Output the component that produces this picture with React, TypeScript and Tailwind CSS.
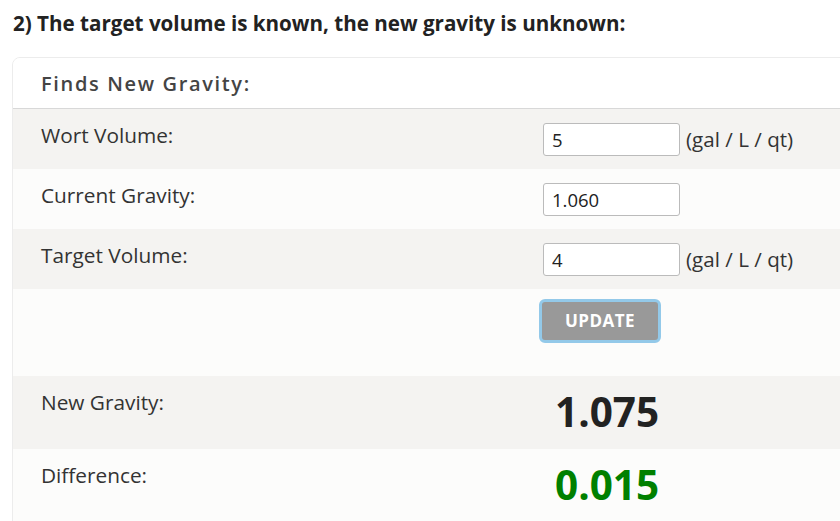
import { useState } from 'react'

const FONT = { fontFamily: '"Open Sans", "Noto Sans", Arial, sans-serif' }

interface RowProps {
  label: string
  shade: boolean
  height: string
  children?: React.ReactNode
}

function Row({ label, shade, height, children }: RowProps) {
  return (
    <div className={`flex ${height} ${shade ? 'bg-[#f4f3f1]' : 'bg-[#fcfcfb]'}`}>
      <div className="w-[530px] shrink-0 pl-[28px] pt-[11px] text-[20.8px] text-[#333]">{label}</div>
      <div className="flex-1">{children}</div>
    </div>
  )
}

function NumInput({ value, onChange, unit }: { value: string; onChange: (v: string) => void; unit?: boolean }) {
  return (
    <div className="flex items-center pt-[14px]">
      <input
        value={value}
        onChange={(e) => onChange(e.target.value)}
        className="w-[137px] h-[33px] bg-white border border-[#bbb] rounded-[3px] px-[8px] text-[18.5px] text-[#222] outline-none"
        style={FONT}
      />
      {unit && <span className="ml-[6px] text-[20.6px] text-[#333]">(gal / L / qt)</span>}
    </div>
  )
}

export default function App() {
  const [wort, setWort]       = useState('5')
  const [gravity, setGravity] = useState('1.060')
  const [target, setTarget]   = useState('4')

  return (
    <div className="w-[840px] h-[521px] overflow-hidden bg-white" style={FONT}>
      <h2 className="pl-[13px] pt-[8px] h-[57px] text-[20.6px] font-bold text-[#222]">
        2) The target volume is known, the new gravity is unknown:
      </h2>
      <div className="ml-[12px] w-[880px] border border-[#ececec] rounded-[8px] overflow-hidden bg-[#fcfcfb]">
        <div className="h-[51px] bg-white border-b border-[#d8d8d8] pl-[28px] pt-[11px] text-[20px] font-semibold tracking-[1.65px] text-[#444]">
          Finds New Gravity:
        </div>
        <Row label="Wort Volume:" shade height="h-[60px]">
          <NumInput value={wort} onChange={setWort} unit />
        </Row>
        <Row label="Current Gravity:" shade={false} height="h-[60px]">
          <NumInput value={gravity} onChange={setGravity} />
        </Row>
        <Row label="Target Volume:" shade height="h-[60px]">
          <NumInput value={target} onChange={setTarget} unit />
        </Row>
        <Row label="" shade={false} height="h-[87px]">
          <div className="pt-[10px]">
            <button className="-ml-[4px] h-[44px] w-[122px] rounded-[6px] border-[3px] border-[#93c9e9] bg-[#999] text-[17px] font-bold tracking-[0.5px] text-white">
              UPDATE
            </button>
          </div>
        </Row>
        <Row label="New Gravity:" shade height="h-[73px]">
          <div className="pl-[12px] pt-[12px] text-[40.5px] font-bold leading-[48px] text-[#222]">1.075</div>
        </Row>
        <Row label="Difference:" shade={false} height="h-[80px]">
          <div className="pl-[12px] pt-[12px] text-[40.5px] font-bold leading-[48px] text-[#008000]">0.015</div>
        </Row>
      </div>
    </div>
  )
}
